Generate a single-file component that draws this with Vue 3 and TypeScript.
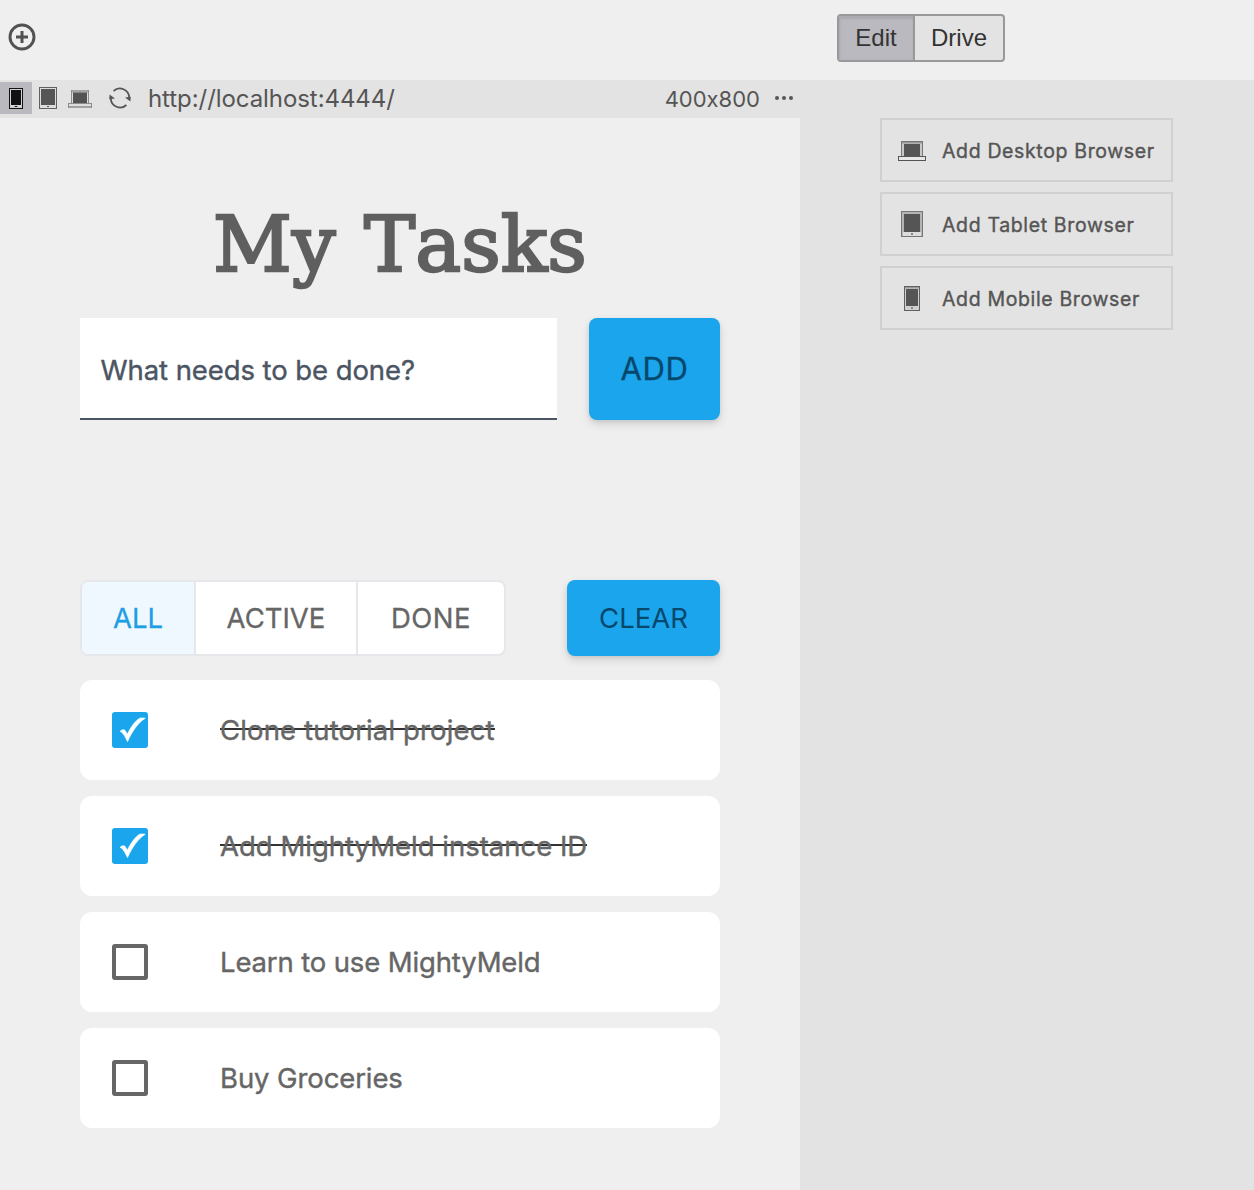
<script setup lang="ts">
import { ref } from 'vue'

interface Task {
  id: number
  label: string
  done: boolean
  spacing: number
}

type Device = 'desktop' | 'tablet' | 'mobile'

const mode = ref<'Edit' | 'Drive'>('Edit')
const activeFilter = ref('ALL')

const filters = [
  { label: 'ALL', width: 112 },
  { label: 'ACTIVE', width: 162 },
  { label: 'DONE', width: 148 },
]

const tasks = ref<Task[]>([
  { id: 1, label: 'Clone tutorial project', done: true, spacing: 0.14 },
  { id: 2, label: 'Add MightyMeld instance ID', done: true, spacing: 0 },
  { id: 3, label: 'Learn to use MightyMeld', done: false, spacing: -0.14 },
  { id: 4, label: 'Buy Groceries', done: false, spacing: -0.1 },
])

const browsers: { device: Device; label: string }[] = [
  { device: 'desktop', label: 'Add Desktop Browser' },
  { device: 'tablet', label: 'Add Tablet Browser' },
  { device: 'mobile', label: 'Add Mobile Browser' },
]
</script>

<template>
  <div class="app">
    <header class="topbar">
      <button class="icon-btn add-view" aria-label="Add">
        <svg width="28" height="28" viewBox="0 0 28 28" fill="none" stroke="#525252">
          <circle cx="14" cy="14" r="12" stroke-width="2.9" />
          <path d="M14 8v12M8 14h12" stroke-width="3" />
        </svg>
      </button>
      <div class="mode">
        <button :class="{ on: mode === 'Edit' }" @click="mode = 'Edit'">Edit</button>
        <button :class="{ on: mode === 'Drive' }" @click="mode = 'Drive'">Drive</button>
      </div>
    </header>

    <div class="body">
      <section class="preview">
        <div class="toolbar">
          <button class="icon-btn device selected" aria-label="Mobile">
            <svg width="32" height="32" viewBox="0 0 32 32">
              <rect x="9.5" y="6.5" width="13" height="20" fill="#d2d2d6" stroke="#111" />
              <rect x="11" y="8" width="10" height="15" fill="#111" />
              <rect x="14.7" y="24" width="2.6" height="1" fill="#111" />
            </svg>
          </button>
          <button class="icon-btn device" aria-label="Tablet">
            <svg width="32" height="32" viewBox="0 0 32 32">
              <rect x="7.5" y="5.5" width="17" height="21" fill="#dcdcdc" stroke="#606060" />
              <rect x="9" y="7" width="14" height="16" fill="#555" />
              <rect x="15" y="24" width="2" height="1" fill="#555" />
            </svg>
          </button>
          <button class="icon-btn device" aria-label="Desktop">
            <svg width="32" height="32" viewBox="0 0 32 32">
              <rect x="7" y="8" width="18" height="14" fill="#a2a2a2" />
              <rect x="8" y="10.500" width="16" height="11" fill="#dedede" />
              <path d="M7.500 8v14M24.500 8v14" stroke="#8c8c8c" />
              <rect x="9" y="10.500" width="14" height="10.500" fill="#535353" />
              <rect x="4.500" y="21.500" width="23" height="4" fill="#dedede" stroke="#8c8c8c" />
              <rect x="5" y="24" width="22" height="2" fill="#a2a2a2" />
            </svg>
          </button>
          <button class="icon-btn reload" aria-label="Reload">
            <svg width="24" height="24" viewBox="0 0 24 24" fill="none" stroke="#555" stroke-width="1.8">
              <path d="M5.600 5A9.300 9.300 0 0 1 21.200 11.500" />
              <path d="M18.400 19A9.300 9.300 0 0 1 2.800 12.500" />
              <path d="M17 11.500l5.800 -.8l-.4 4.800z" fill="#555" stroke="none" />
              <path d="M7 12.500l-5.800 .8l.4 -4.800z" fill="#555" stroke="none" />
            </svg>
          </button>
          <span class="url">http://localhost:4444/</span>
          <span class="size">400x800</span>
          <button class="icon-btn more" aria-label="More">
            <svg width="20" height="6" viewBox="0 0 20 6" fill="#555">
              <circle cx="3" cy="3" r="2" /><circle cx="10" cy="3" r="2" /><circle cx="17" cy="3" r="2" />
            </svg>
          </button>
        </div>

        <main class="page">
          <h1>My Tasks</h1>

          <form class="entry" @submit.prevent>
            <div class="field">What needs to be done?</div>
            <button class="primary add">ADD</button>
          </form>

          <div class="controls">
            <div class="filters">
              <button
                v-for="f in filters"
                :key="f.label"
                :class="{ on: activeFilter === f.label }"
                :style="{ width: f.width + 'px' }"
                @click="activeFilter = f.label"
              >{{ f.label }}</button>
            </div>
            <button class="primary clear">CLEAR</button>
          </div>

          <ul class="tasks">
            <li v-for="t in tasks" :key="t.id">
              <button class="check" :class="{ checked: t.done }" :aria-label="t.label" @click="t.done = !t.done">
                <svg v-if="t.done" width="36" height="36" viewBox="0 0 36 36">
                  <path d="M8 19.300C10 17.600 11.800 17.300 13 18.300L15.300 22.300C19 14.800 23.500 8.500 27.800 6.200C29.500 5.800 31.500 5.800 33.200 6.300C26.500 10.500 20.500 18.500 15.500 29.600C13.500 25.500 11.200 20.500 8 19.300Z" fill="#fff" stroke="#fff" stroke-width=".7" />
                </svg>
              </button>
              <span class="label" :class="{ struck: t.done }" :style="{ letterSpacing: t.spacing + 'px' }">{{ t.label }}</span>
            </li>
          </ul>
        </main>
      </section>

      <aside class="side">
        <button v-for="b in browsers" :key="b.device" class="launch">
          <svg v-if="b.device === 'desktop'" width="28" height="28" viewBox="0 0 28 28">
            <rect x="3.500" y="5.500" width="21" height="16" fill="#c8c8c8" stroke="#777" />
            <rect x="4" y="6" width="20" height="1.500" fill="#999" />
            <rect x="6" y="8" width="16" height="12" fill="#555" />
            <rect x="4" y="20" width="20" height="1" fill="#ddd" />
            <rect x=".5" y="20.500" width="27" height="4" fill="#e8e8e8" stroke="#555" />
          </svg>
          <svg v-else-if="b.device === 'tablet'" width="28" height="28" viewBox="0 0 28 28">
            <rect x="3.500" y="1.500" width="21" height="25" fill="#b4b4b4" stroke="#777" />
            <rect x="5" y="22" width="18" height="4" fill="#dcdcdc" />
            <rect x="6" y="4" width="16" height="18" fill="#555" />
            <rect x="13" y="23" width="2" height="2" fill="#888" />
          </svg>
          <svg v-else width="28" height="28" viewBox="0 0 28 28">
            <rect x="6.500" y="2.500" width="15" height="24" fill="#d0d0d0" stroke="#606060" />
            <rect x="7" y="3" width="14" height="1.500" fill="#999" />
            <rect x="8" y="5" width="12" height="17" fill="#555" />
            <rect x="13" y="23" width="2" height="2" fill="#888" />
          </svg>
          <span>{{ b.label }}</span>
        </button>
      </aside>
    </div>
  </div>
</template>

<style>
body {
  margin: 0;
  background: #e3e3e3;
}
</style>

<style scoped>
.app {
  width: 1254px;
  height: 1190px;
  overflow: hidden;
  display: flex;
  flex-direction: column;
  background: #e3e3e3;
  color: #555;
  font-family: Inter, sans-serif;
}
button {
  font: inherit;
  color: inherit;
  margin: 0;
  padding: 0;
  border: 0;
  background: none;
  box-sizing: border-box;
}
svg {
  display: block;
}
.icon-btn {
  display: flex;
  align-items: center;
  justify-content: center;
}
.topbar {
  height: 80px;
  flex: none;
  display: flex;
  align-items: flex-start;
  background: #efefef;
}
.add-view {
  margin: 23px 0 0 8px;
}
.mode {
  display: flex;
  margin: 14px 0 0 801px;
  width: 168px;
  height: 48px;
  box-sizing: border-box;
  border: 2px solid #999;
  border-radius: 4px;
  overflow: hidden;
  background: #e3e3e3;
  color: #333;
  font: 24px "Liberation Sans", sans-serif;
}
.mode button {
  flex: 1;
}
.mode button:first-child {
  flex: none;
  width: 76px;
  border-right: 2px solid #999;
}
.mode .on {
  background: #b9b9bf;
  box-shadow: inset 0 3px 2px #aaaab0, inset 1px 0 2px #aaaab0;
}
.body {
  flex: 1;
  display: flex;
  min-height: 0;
}
.preview {
  width: 800px;
  display: flex;
  flex-direction: column;
}
.toolbar {
  height: 38px;
  flex: none;
  display: flex;
  align-items: center;
  box-sizing: border-box;
  padding-bottom: 2px;
}
.device {
  width: 32px;
  height: 32px;
}
.selected {
  background: #b9b9bf;
}
.reload {
  width: 24px;
  margin-left: 12px;
}
.url {
  margin-left: 16px;
  padding-top: 2px;
  font-size: 24px;
  line-height: 34px;
  letter-spacing: -0.07px;
  font-feature-settings: "calt" 0;
}
.size {
  margin-left: auto;
  padding-top: 2px;
  font-size: 22px;
  letter-spacing: 0;
  font-feature-settings: "calt" 0;
}
.more {
  margin: 0 6px 0 14px;
}
.page {
  flex: 1;
  padding: 0 80px;
  background: #efefef;
}
h1 {
  margin: 75px 0 0;
  height: 125px;
  text-align: center;
  font: 400 77px/104px "DejaVu Serif", serif;
  font-kerning: none;
  word-spacing: 4px;
  color: #5f5f5f;
  -webkit-text-stroke: 2.400px #5f5f5f;
}
.entry {
  display: flex;
  justify-content: space-between;
  height: 102px;
}
.field {
  width: 477px;
  box-sizing: border-box;
  padding-left: 20.500px;
  border-bottom: 2px solid #4b5563;
  background: #fff;
  color: #4b5563;
  font-size: 27.500px;
  letter-spacing: -0.08px;
  line-height: 104px;
  -webkit-text-stroke: 0.4px #4b5563;
}
.primary {
  border-radius: 8px;
  background: #1aa5ed;
  color: #07476c;
  box-shadow: 0 4px 10px rgba(0, 0, 0, 0.12), 0 2px 4px rgba(0, 0, 0, 0.07);
}
.add {
  width: 131px;
  padding-bottom: 1px;
  font-size: 31px;
  letter-spacing: 0.600px;
  -webkit-text-stroke: 0.3px #07476c;
}
.controls {
  display: flex;
  justify-content: space-between;
  height: 76px;
  margin-top: 160px;
}
.filters {
  display: flex;
  box-sizing: border-box;
  width: 426px;
  border: 2px solid #e5e7eb;
  border-radius: 8px;
  overflow: hidden;
  background: #fff;
  color: #666;
  font-size: 27.500px;
  letter-spacing: -0.200px;
  -webkit-text-stroke: 0.3px;
}
.filters button + button {
  border-left: 2px solid #e5e7eb;
}
.filters button:last-child {
  letter-spacing: 0.500px;
}
.filters .on {
  background: #f0f8ff;
  color: #1e9fe3;
}
.clear {
  width: 153px;
  font-size: 27.500px;
}
.tasks {
  list-style: none;
  margin: 24px 0 0;
  padding: 0;
  display: flex;
  flex-direction: column;
  gap: 16px;
}
.tasks li {
  display: flex;
  align-items: center;
  height: 100px;
  box-sizing: border-box;
  padding-left: 32px;
  border-radius: 12px;
  background: #fff;
}
.check {
  width: 36px;
  height: 36px;
  flex: none;
  border: 4px solid #666;
  border-radius: 3px;
}
.check.checked {
  border: 0;
  background: #1aa5ed;
}
.label {
  margin-left: 72px;
  color: #666;
  font-size: 27.500px;
  line-height: 36px;
  -webkit-text-stroke: 0.4px #666;
}
.struck {
  background: linear-gradient(#333, #333) 0 16px / 100% 2px no-repeat;
}
.side {
  flex: 1;
  display: flex;
  flex-direction: column;
  align-items: flex-start;
  gap: 10px;
  padding: 38px 0 0 80px;
}
.launch {
  display: flex;
  align-items: center;
  width: 293px;
  height: 64px;
  padding-left: 16px;
  border: 2px solid #d0d0d0;
  font-size: 19.500px;
  letter-spacing: 0.640px;
  -webkit-text-stroke: 0.4px #555;
}
.launch span {
  margin: 2px 0 0 16px;
}
</style>
